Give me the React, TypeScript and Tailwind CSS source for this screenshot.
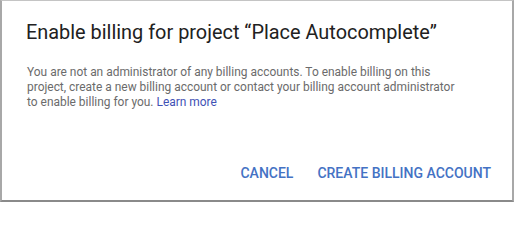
export default function App() {
  return (
    <div className="w-[514px] h-[203px] bg-white" style={{ fontFamily: "Roboto, 'Liberation Sans', sans-serif" }}>
      <div className="w-[514px] h-[202px] border-t border-l-2 border-r-2 border-b-2 border-t-[#c4c4c4] border-l-[#a8a8a8] border-r-[#a8a8a8] border-b-[#8a8a8a] flex flex-col">
        <h1 className="pl-6 pt-[19px] text-[19.9px] leading-[26px] text-[#212121] whitespace-nowrap">
          Enable billing for project “Place Autocomplete”
        </h1>
        <p className="pl-[25px] mt-[19px] text-[11.95px] leading-[15px] text-[#6b6b6b] whitespace-nowrap">
          You are not an administrator of any billing accounts. To enable billing on this
          <br />
          project, create a new billing account or contact your billing account administrator
          <br />
          to enable billing for you. <span className="text-[#3f51b5]">Learn more</span>
        </p>
        <div className="mt-auto mb-[16px] flex justify-end gap-6 pr-[21px] text-[14px] font-medium text-[#4472c4]">
          <span>CANCEL</span>
          <span>CREATE BILLING ACCOUNT</span>
        </div>
      </div>
    </div>
  );
}
